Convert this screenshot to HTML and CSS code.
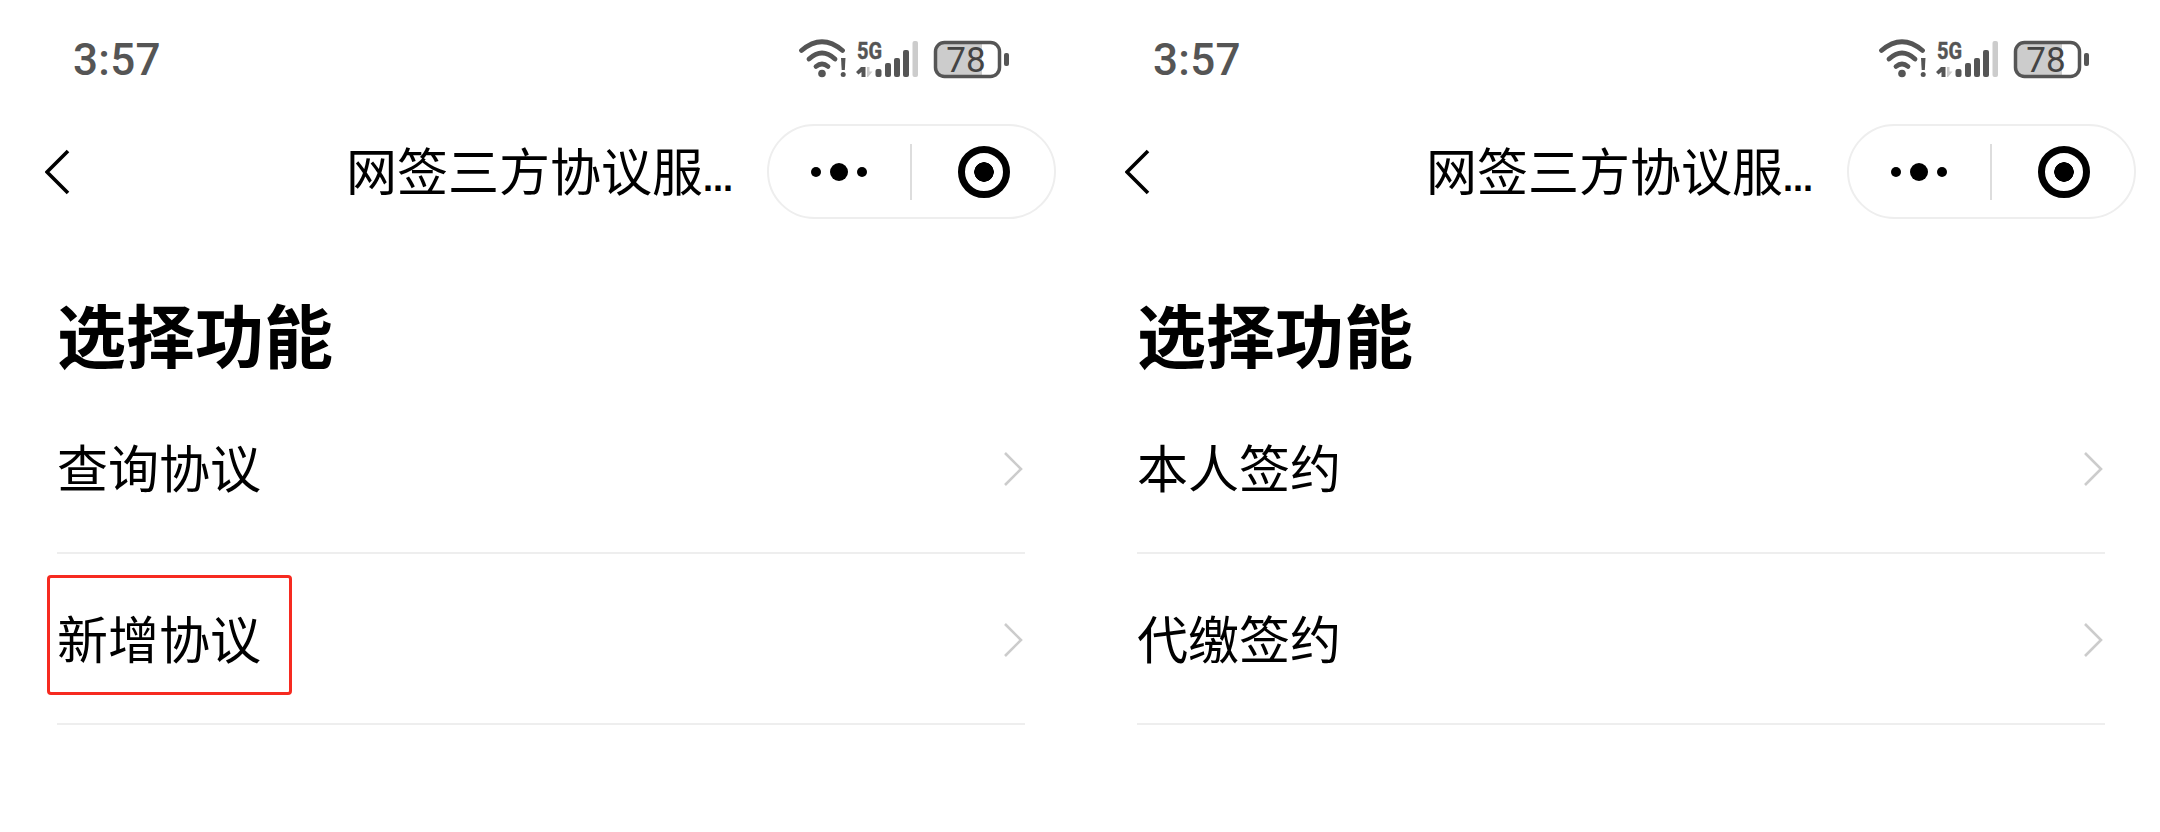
FILE: index.html
```html
<!DOCTYPE html>
<html lang="zh-CN">
<head>
    <meta charset="UTF-8"/>
    <title>选择功能</title>
    <link rel="stylesheet" href="styles.css">
</head>
<body>
<div class="screens">
    <div class="screen">
        <div class="status-bar">
            <span class="time">3:57</span>
            <svg class="status-icons" width="213" height="60" viewBox="799 30 213 60">
                <g fill="none" stroke="#555" stroke-width="4.8" stroke-linecap="round">
                    <path d="M801.5 50.5 Q822 33 842.5 50.5"/>
                    <path d="M809 59 Q822 47 835 59"/>
                    <path d="M816 66.5 Q822 61.5 828 66.5"/>
                </g>
                <circle cx="822" cy="73.5" r="3.8" fill="#555"/>
                <path d="M841 58h4.5l-.7 12h-3.1z" fill="#555"/>
                <circle cx="843.2" cy="74.5" r="2.5" fill="#555"/>
                <text class="net" x="857" y="59" textLength="25" lengthAdjust="spacingAndGlyphs">5G</text>
                <path d="M856 72l5-5h4.5v10h-4v-5l-3 2.5z" fill="#555"/>
                <path d="M867 67h2.5v4.5h3l-4.5 5.5h-1z" fill="#ccc"/>
                <rect x="875.5" y="69" width="6" height="8" rx="2" fill="#555"/>
                <rect x="885" y="63" width="6" height="14" rx="2" fill="#555"/>
                <rect x="894" y="58" width="6" height="19" rx="2" fill="#555"/>
                <rect x="903" y="50" width="6" height="27" rx="2" fill="#555"/>
                <rect x="912.5" y="41" width="5.5" height="36" rx="2" fill="#ccc"/>
                <path d="M944 43h38v33h-38a8 8 0 0 1-8-8v-17a8 8 0 0 1 8-8z" fill="#ccc"/>
                <rect x="935.5" y="42.5" width="64" height="34" rx="9" fill="none" stroke="#555" stroke-width="3.5"/>
                <rect x="1004" y="53" width="5" height="13" rx="2" fill="#555"/>
                <text class="level" x="966" y="72" text-anchor="middle">78</text>
            </svg>
        </div>
        <div class="nav-bar">
            <svg class="back" width="26" height="48" viewBox="0 0 26 48">
                <path d="M23 3 L2 24 L23 45" fill="none" stroke="#000" stroke-width="3.6"/>
            </svg>
            <span class="nav-title">网签三方协议服<span class="dots">...</span></span>
            <div class="capsule">
                <div class="capsule-more"><i class="dot"></i><i class="dot big"></i><i class="dot"></i></div>
                <div class="capsule-close"><i class="target"></i></div>
            </div>
        </div>
        <h1>选择功能</h1>
        <ul class="menu">
            <li class="menu-item">
                <span class="item-label">查询协议</span>
                <svg class="arrow" width="20" height="34" viewBox="0 0 20 34"><path d="M2 1 L18 17 L2 33" fill="none" stroke="#ccc" stroke-width="2.6"/></svg>
            </li>
            <li class="menu-item">
                <span class="item-label">新增协议</span>
                <svg class="arrow" width="20" height="34" viewBox="0 0 20 34"><path d="M2 1 L18 17 L2 33" fill="none" stroke="#ccc" stroke-width="2.6"/></svg>
                <div class="mark"></div>
            </li>
        </ul>
    </div>

    <div class="screen">
        <div class="status-bar">
            <span class="time">3:57</span>
            <svg class="status-icons" width="213" height="60" viewBox="799 30 213 60">
                <g fill="none" stroke="#555" stroke-width="4.8" stroke-linecap="round">
                    <path d="M801.5 50.5 Q822 33 842.5 50.5"/>
                    <path d="M809 59 Q822 47 835 59"/>
                    <path d="M816 66.5 Q822 61.5 828 66.5"/>
                </g>
                <circle cx="822" cy="73.5" r="3.8" fill="#555"/>
                <path d="M841 58h4.5l-.7 12h-3.1z" fill="#555"/>
                <circle cx="843.2" cy="74.5" r="2.5" fill="#555"/>
                <text class="net" x="857" y="59" textLength="25" lengthAdjust="spacingAndGlyphs">5G</text>
                <path d="M856 72l5-5h4.5v10h-4v-5l-3 2.5z" fill="#555"/>
                <path d="M867 67h2.5v4.5h3l-4.5 5.5h-1z" fill="#ccc"/>
                <rect x="875.5" y="69" width="6" height="8" rx="2" fill="#555"/>
                <rect x="885" y="63" width="6" height="14" rx="2" fill="#555"/>
                <rect x="894" y="58" width="6" height="19" rx="2" fill="#555"/>
                <rect x="903" y="50" width="6" height="27" rx="2" fill="#555"/>
                <rect x="912.5" y="41" width="5.5" height="36" rx="2" fill="#ccc"/>
                <path d="M944 43h38v33h-38a8 8 0 0 1-8-8v-17a8 8 0 0 1 8-8z" fill="#ccc"/>
                <rect x="935.5" y="42.5" width="64" height="34" rx="9" fill="none" stroke="#555" stroke-width="3.5"/>
                <rect x="1004" y="53" width="5" height="13" rx="2" fill="#555"/>
                <text class="level" x="966" y="72" text-anchor="middle">78</text>
            </svg>
        </div>
        <div class="nav-bar">
            <svg class="back" width="26" height="48" viewBox="0 0 26 48">
                <path d="M23 3 L2 24 L23 45" fill="none" stroke="#000" stroke-width="3.6"/>
            </svg>
            <span class="nav-title">网签三方协议服<span class="dots">...</span></span>
            <div class="capsule">
                <div class="capsule-more"><i class="dot"></i><i class="dot big"></i><i class="dot"></i></div>
                <div class="capsule-close"><i class="target"></i></div>
            </div>
        </div>
        <h1>选择功能</h1>
        <ul class="menu">
            <li class="menu-item">
                <span class="item-label">本人签约</span>
                <svg class="arrow" width="20" height="34" viewBox="0 0 20 34"><path d="M2 1 L18 17 L2 33" fill="none" stroke="#ccc" stroke-width="2.6"/></svg>
            </li>
            <li class="menu-item">
                <span class="item-label">代缴签约</span>
                <svg class="arrow" width="20" height="34" viewBox="0 0 20 34"><path d="M2 1 L18 17 L2 33" fill="none" stroke="#ccc" stroke-width="2.6"/></svg>
            </li>
        </ul>
    </div>
</div>
</body>
</html>
```

FILE: styles.css
```css
body {
    margin: 0;
    background: #fff;
    color: #000;
    font-family: "Noto Sans CJK SC", "Noto Sans", sans-serif;
}

.screens {
    display: flex;
    height: 832px;
    overflow: hidden;
}

.screen {
    flex: 0 0 1080px;
}

/* status bar */
.status-bar {
    display: flex;
    align-items: center;
    justify-content: space-between;
    height: 40px;
    padding: 40px 68px 44px 73px;
}

.time {
    font-family: Roboto, sans-serif;
    font-size: 44px;
    font-weight: 500;
    letter-spacing: 0.3px;
    color: #555;
}

.net {
    font-family: Roboto, sans-serif;
    font-size: 24px;
    font-weight: 700;
    fill: #555;
    stroke: #555;
    stroke-width: 0.5px;
}

.level {
    font-family: Roboto, sans-serif;
    font-size: 35px;
    fill: #444;
}

/* nav bar */
.nav-bar {
    display: flex;
    align-items: center;
    height: 95px;
    padding: 0 24px 0 45px;
}

.back {
    flex: none;
}

.nav-title {
    margin: 0 0 5px 275px;
    width: 400px;
    font-size: 51px;
    white-space: nowrap;
}

.dots {
    font-family: "Liberation Sans", sans-serif;
    font-size: 36px;
    font-weight: 700;
}

.capsule {
    display: flex;
    align-items: center;
    box-sizing: border-box;
    width: 289px;
    height: 95px;
    margin-left: auto;
    border: 2px solid #eee;
    border-radius: 48px;
}

.capsule-more {
    display: flex;
    align-items: center;
    justify-content: center;
    gap: 9px;
    box-sizing: border-box;
    width: 143px;
    height: 56px;
    border-right: 2px solid #ddd;
    padding-right: 2px;
}

.dot {
    width: 10px;
    height: 10px;
    border-radius: 50%;
    background: #000;
}

.dot.big {
    width: 18px;
    height: 18px;
}

.capsule-close {
    flex: 1;
    display: flex;
    justify-content: center;
    padding-left: 2px;
}

.target {
    box-sizing: border-box;
    width: 52px;
    height: 52px;
    border: 7px solid #000;
    border-radius: 50%;
    background: radial-gradient(circle, #000 0 9.5px, #fff 10px);
}

/* content */
h1 {
    margin: 65px 0 0 57px;
    font-size: 69px;
    font-weight: 700;
    line-height: 99px;
}

.menu {
    list-style: none;
    padding: 0;
    margin: 0 55px 0 57px;
}

.menu-item {
    position: relative;
    display: flex;
    align-items: center;
    justify-content: space-between;
    box-sizing: border-box;
    height: 171px;
    border-bottom: 2px solid #eee;
    font-size: 51px;
    padding-right: 2px;
}

.item-label {
    margin-bottom: 3px;
}

.arrow {
    margin-top: 2px;
}

.mark {
    position: absolute;
    left: -10px;
    top: 21px;
    box-sizing: border-box;
    width: 245px;
    height: 120px;
    border: 3px solid #f62a20;
    border-radius: 4px;
}
```
